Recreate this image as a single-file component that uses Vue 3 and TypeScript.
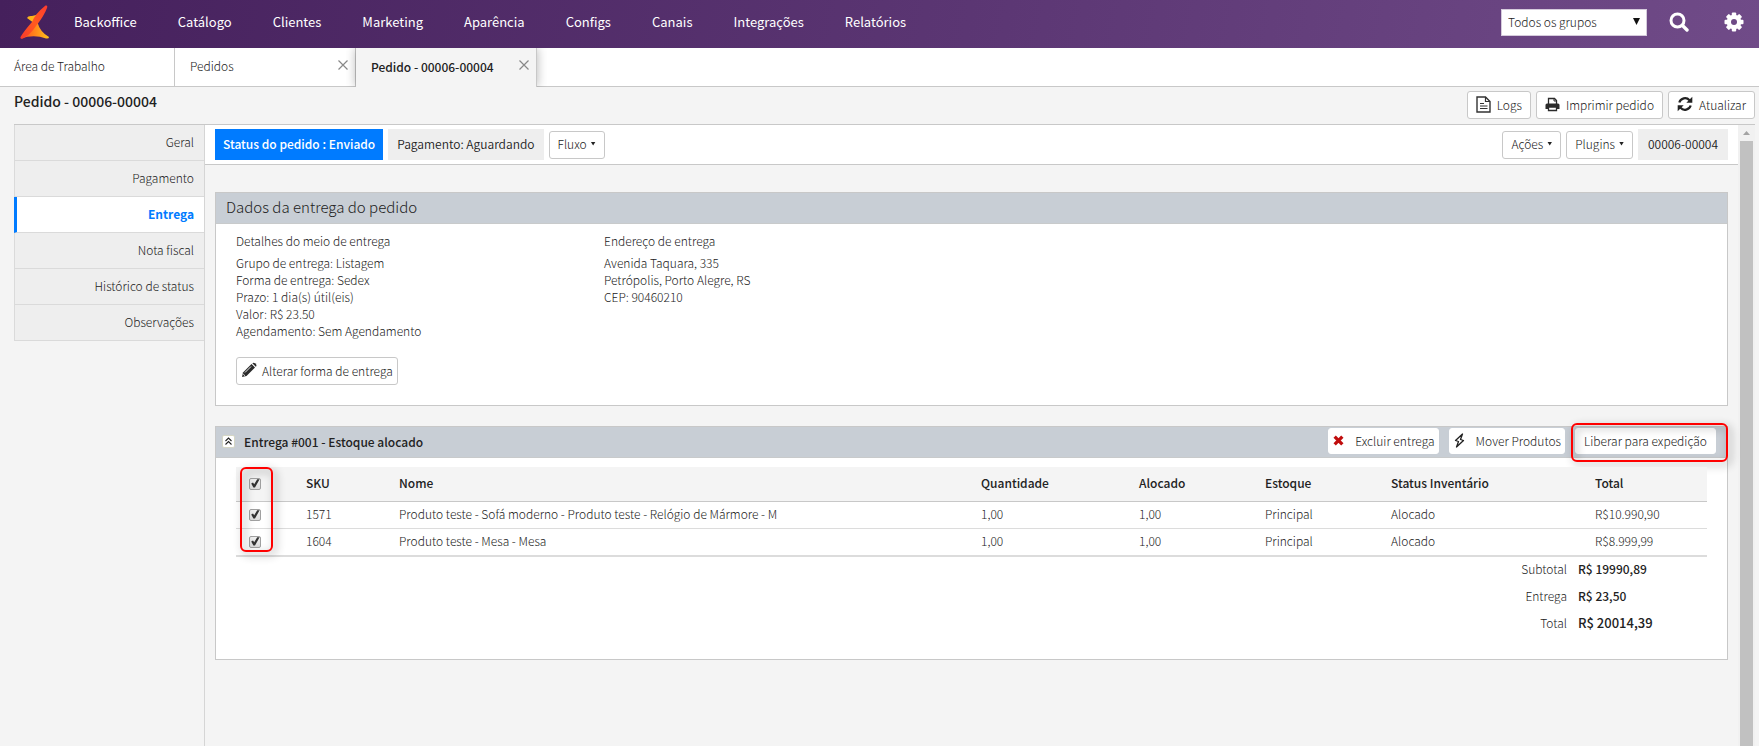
<script setup lang="ts">
import { computed, ref } from 'vue'

interface Product {
  sku: string
  name: string
  quantity: string
  allocated: string
  stock: string
  status: string
  total: string
  selected: boolean
}

const menu = ['Backoffice', 'Catálogo', 'Clientes', 'Marketing', 'Aparência', 'Configs', 'Canais', 'Integrações', 'Relatórios']
const sections = ['Geral', 'Pagamento', 'Entrega', 'Nota fiscal', 'Histórico de status', 'Observações']
const columns = ['SKU', 'Nome', 'Quantidade', 'Alocado', 'Estoque', 'Status Inventário', 'Total']

const group = ref('Todos os grupos')
const current = ref('Entrega')
const open = ref(true)

const deliveryLines = [
  'Grupo de entrega: Listagem',
  'Forma de entrega: Sedex',
  'Prazo: 1 dia(s) útil(eis)',
  'Valor: R$ 23.50',
  'Agendamento: Sem Agendamento',
]
const addressLines = ['Avenida Taquara, 335', 'Petrópolis, Porto Alegre, RS', 'CEP: 90460210']

const products = ref<Product[]>([
  {
    sku: '1571',
    name: 'Produto teste - Sofá moderno - Produto teste - Relógio de Mármore - M',
    quantity: '1,00',
    allocated: '1,00',
    stock: 'Principal',
    status: 'Alocado',
    total: 'R$10.990,90',
    selected: true,
  },
  {
    sku: '1604',
    name: 'Produto teste - Mesa - Mesa',
    quantity: '1,00',
    allocated: '1,00',
    stock: 'Principal',
    status: 'Alocado',
    total: 'R$8.999,99',
    selected: true,
  },
])

const allSelected = computed({
  get: () => products.value.every((p) => p.selected),
  set: (value: boolean) => products.value.forEach((p) => (p.selected = value)),
})
</script>

<template>
  <div class="app">
    <header class="topbar">
      <a class="logo" href="#" aria-label="Início">
        <svg viewBox="0 0 30 34" width="30" height="34" aria-hidden="true">
          <defs>
            <linearGradient id="blade" x1="1" y1="0" x2="0" y2="1">
              <stop offset="0" stop-color="#ff3b30" />
              <stop offset="0.5" stop-color="#ff5a1f" />
              <stop offset="1" stop-color="#f8382c" />
            </linearGradient>
            <linearGradient id="foot" x1="0" y1="0" x2="1" y2="0">
              <stop offset="0" stop-color="#ff4a1c" />
              <stop offset="1" stop-color="#ffc21a" />
            </linearGradient>
          </defs>
          <path d="M7 13 Q8 10.500 12 11 Q16 11 19 8 L16 21 Q12 16 7 13Z" fill="#fdb31b" />
          <path d="M12 20 L17.500 17.500 Q20 27 29 32 Q29 34 26 33.500 Q14 29 1 33.500Z" fill="url(#foot)" />
          <path d="M25.500 0.500 Q28 0 27 3 Q24 11 16 21 Q10 30 3 33.500 Q0 34.500 0.500 32 Q4 26 12 17 Q15 9 25.500 0.500Z" fill="url(#blade)" />
        </svg>
      </a>
      <nav class="menu" aria-label="Principal">
        <a v-for="item in menu" :key="item" href="#">{{ item }}</a>
      </nav>
      <div class="tools">
        <label class="group">
          <select v-model="group" aria-label="Grupo">
            <option>Todos os grupos</option>
          </select>
          <svg viewBox="0 0 7 7" width="7" height="7" aria-hidden="true"><path d="M0 0H7L3.500 7Z" fill="#111" /></svg>
        </label>
        <button class="tool" type="button" aria-label="Buscar">
          <svg viewBox="0 0 20 20" width="20" height="20" aria-hidden="true">
            <circle cx="8.500" cy="8.500" r="6.500" fill="none" stroke="#fff" stroke-width="3" />
            <path d="M13.500 13.500L18 18" stroke="#fff" stroke-width="3.400" stroke-linecap="round" />
          </svg>
        </button>
        <button class="tool" type="button" aria-label="Configurações">
          <svg viewBox="0 0 20 20" width="20" height="20" aria-hidden="true">
            <g fill="#fff">
              <rect v-for="a in [0, 45, 90, 135]" :key="a" x="7.800" y="0.500" width="4.400" height="19" rx="1" :transform="`rotate(${a} 10 10)`" />
              <circle cx="10" cy="10" r="7.300" />
            </g>
            <circle cx="10" cy="10" r="3" fill="#6e4a86" />
          </svg>
        </button>
      </div>
    </header>

    <nav class="tabs" aria-label="Abas">
      <div class="tab home"><a href="#">Área de Trabalho</a></div>
      <div class="tab">
        <a href="#">Pedidos</a>
        <button type="button" class="close" aria-label="Fechar Pedidos">
          <svg viewBox="0 0 10 10" width="10" height="10" aria-hidden="true"><path d="M0.500 0.500L9.500 9.500M9.500 0.500L0.500 9.500" stroke="#888" stroke-width="1.200" /></svg>
        </button>
      </div>
      <div class="tab active">
        <a href="#" aria-current="page">Pedido - 00006-00004</a>
        <button type="button" class="close" aria-label="Fechar Pedido">
          <svg viewBox="0 0 10 10" width="10" height="10" aria-hidden="true"><path d="M0.500 0.500L9.500 9.500M9.500 0.500L0.500 9.500" stroke="#888" stroke-width="1.200" /></svg>
        </button>
      </div>
    </nav>

    <div class="heading">
      <h1>Pedido - 00006-00004</h1>
      <div class="actions">
        <button type="button" class="btn">
          <svg viewBox="0 0 15 17" width="15" height="17" aria-hidden="true">
            <path d="M1 1H9.500L14 5.500V16H1Z" fill="#fff" stroke="#333" stroke-width="1.400" />
            <path d="M9.500 1V5.500H14" fill="none" stroke="#333" stroke-width="1.200" />
            <path d="M4 7.500H8M4 10H11.500M4 12.500H11.500" stroke="#333" stroke-width="1.200" />
          </svg>
          Logs
        </button>
        <button type="button" class="btn">
          <svg viewBox="0 0 15 15" width="15" height="15" aria-hidden="true">
            <path d="M3.500 7V1.500H9.500L11.500 3.500V7" fill="#fff" stroke="#2b2b2b" stroke-width="1.300" />
            <path d="M9 1.500V4H11.500" fill="none" stroke="#2b2b2b" />
            <path d="M2 6.500H13Q14.500 6.500 14.500 8V12H0.500V8Q0.500 6.500 2 6.500Z" fill="#2b2b2b" />
            <path d="M3.500 10H11.500V13.500H3.500Z" fill="#fff" stroke="#2b2b2b" stroke-width="1.300" />
          </svg>
          Imprimir pedido
        </button>
        <button type="button" class="btn">
          <svg viewBox="0 0 16 16" width="16" height="16" aria-hidden="true">
            <path d="M2.300 6.500A6 6 0 0 1 12.500 4.200" fill="none" stroke="#222" stroke-width="2.200" />
            <path d="M15.300 0.800V6.800H9.300Z" fill="#222" />
            <path d="M13.700 9.500A6 6 0 0 1 3.500 11.800" fill="none" stroke="#222" stroke-width="2.200" />
            <path d="M0.700 15.200V9.200H6.700Z" fill="#222" />
          </svg>
          Atualizar
        </button>
      </div>
    </div>

    <div class="workspace">
      <nav class="side" aria-label="Seções do pedido">
        <a v-for="s in sections" :key="s" href="#" :class="{ current: s === current }" @click.prevent="current = s">{{ s }}</a>
      </nav>

      <main class="main">
        <div class="statusbar">
          <span class="badge primary">Status do pedido : Enviado</span>
          <span class="badge">Pagamento: Aguardando</span>
          <button type="button" class="btn menu-btn">Fluxo <i class="caret"></i></button>
          <span class="spacer"></span>
          <button type="button" class="btn menu-btn">Ações <i class="caret"></i></button>
          <button type="button" class="btn menu-btn">Plugins <i class="caret"></i></button>
          <span class="badge code">00006-00004</span>
        </div>

        <section class="panel">
          <h2 class="panel-head title">Dados da entrega do pedido</h2>
          <div class="info">
            <div>
              <h3>Detalhes do meio de entrega</h3>
              <p v-for="line in deliveryLines" :key="line">{{ line }}</p>
            </div>
            <div>
              <h3>Endereço de entrega</h3>
              <p v-for="line in addressLines" :key="line">{{ line }}</p>
            </div>
          </div>
          <button type="button" class="btn edit">
            <svg viewBox="0 0 16 16" width="16" height="16" aria-hidden="true">
              <path d="M1 15L2 10.500L10.500 2L14 5.500L5.500 14Z" fill="#2b2b2b" />
              <path d="M11.300 1.300Q12.500 0 14 1.300L15 2.300Q16 3.500 14.800 4.700Z" fill="#2b2b2b" />
              <path d="M4 10.500L10 4.500" stroke="#fff" stroke-width="0.900" />
              <path d="M2.200 12L4 13.800" stroke="#fff" stroke-width="0.900" />
            </svg>
            Alterar forma de entrega
          </button>
        </section>

        <section class="panel">
          <div class="panel-head">
            <button type="button" class="toggle" :aria-expanded="open" aria-label="Recolher entrega" @click="open = !open">
              <svg viewBox="0 0 7 8" width="7" height="8" aria-hidden="true"><path d="M0.500 4L3.500 1L6.500 4M0.500 7.500L3.500 4.500L6.500 7.500" fill="none" stroke="#222" stroke-width="1.100" /></svg>
            </button>
            <h2>Entrega #001 - Estoque alocado</h2>
            <div class="panel-actions">
              <button type="button" class="flat">
                <svg viewBox="0 0 10 10" width="11" height="11" aria-hidden="true"><path d="M1.500 1.500L8.500 8.500M8.500 1.500L1.500 8.500" stroke="#c00d0d" stroke-width="3" /></svg>
                Excluir entrega
              </button>
              <button type="button" class="flat">
                <svg viewBox="0 0 11 15" width="11" height="15" aria-hidden="true"><path d="M8.500 1L1.500 7.500L4.500 8.500L2.500 14L9.500 7.500L6.500 6.500Z" fill="#fff" stroke="#222" stroke-width="1.300" stroke-linejoin="round" /></svg>
                Mover Produtos
              </button>
              <button type="button" class="flat release">Liberar para expedição</button>
            </div>
            <span class="mark mark-release"></span>
          </div>

          <div v-show="open" class="delivery">
            <div class="table-wrap">
              <table>
                <colgroup>
                  <col class="c-check" /><col class="c-sku" /><col /><col class="c-qty" /><col class="c-mid" /><col class="c-mid" /><col class="c-status" /><col class="c-total" />
                </colgroup>
                <thead>
                  <tr>
                    <th class="check"><input v-model="allSelected" type="checkbox" aria-label="Selecionar todos" /></th>
                    <th v-for="c in columns" :key="c" scope="col">{{ c }}</th>
                  </tr>
                </thead>
                <tbody>
                  <tr v-for="p in products" :key="p.sku">
                    <td class="check"><input v-model="p.selected" type="checkbox" :aria-label="`Selecionar ${p.sku}`" /></td>
                    <td>{{ p.sku }}</td>
                    <td>{{ p.name }}</td>
                    <td>{{ p.quantity }}</td>
                    <td>{{ p.allocated }}</td>
                    <td>{{ p.stock }}</td>
                    <td>{{ p.status }}</td>
                    <td>{{ p.total }}</td>
                  </tr>
                </tbody>
              </table>
              <span class="mark mark-checks"></span>
            </div>
            <dl class="totals">
              <dt>Subtotal</dt><dd>R$ 19990,89</dd>
              <dt>Entrega</dt><dd>R$ 23,50</dd>
              <dt>Total</dt><dd class="grand">R$ 20014,39</dd>
            </dl>
          </div>
        </section>
      </main>

      <div class="scrollbar" aria-hidden="true">
        <svg viewBox="0 0 7 4" width="7" height="4"><path d="M0 4L3.500 0L7 4Z" fill="#a3a3a3" /></svg>
        <div class="thumb"></div>
      </div>
    </div>
  </div>
</template>

<style>
body {
  background: #f4f4f4;
}
</style>

<style scoped>
.app {
  display: flex;
  flex-direction: column;
  min-height: 100vh;
  font-family: "Noto Sans CJK SC", "Open Sans", sans-serif;
  font-size: 12px;
  font-weight: 300;
  line-height: 17px;
  color: #222;
  background: #f4f4f4;
}
.app *,
.app *::before {
  box-sizing: border-box;
}
h1, h2, h3, p, dl, dd {
  margin: 0;
}
a {
  color: inherit;
  text-decoration: none;
}
button, select {
  font: inherit;
  color: inherit;
  cursor: pointer;
}
svg {
  display: block;
  flex: none;
}

.topbar {
  display: flex;
  align-items: center;
  height: 48px;
  padding: 0 15px 4px 20px;
  background: linear-gradient(100deg, #45205c, #5b3673 55%, #704b88);
  color: #fff;
}
.menu {
  display: flex;
  gap: 41px;
  margin-left: 24px;
  padding-bottom: 2px;
  font-size: 13px;
  font-weight: 400;
}
.tools {
  display: flex;
  align-items: center;
  margin-left: auto;
}
.group {
  position: relative;
  margin-right: 22px;
}
.group select {
  display: block;
  appearance: none;
  width: 146px;
  height: 27px;
  padding: 0 6px 2px;
  border: 1px solid #d5cbdc;
  border-radius: 0;
  background: #fff;
  color: #222;
}
.group svg {
  position: absolute;
  top: 9px;
  right: 7px;
  pointer-events: none;
}
.tool {
  padding: 0;
  border: 0;
  background: none;
}
.tool + .tool {
  margin-left: 35px;
}

.tabs {
  display: flex;
  height: 39px;
  border-bottom: 1px solid #c8c8c8;
  background: #fff;
}
.tab {
  display: flex;
  align-items: center;
  justify-content: space-between;
  width: 181px;
  height: 38px;
  padding: 0 7px 3px 15px;
  border-right: 1px solid #c8c8c8;
}
.tab.home {
  width: 175px;
  padding-left: 14px;
}
.tab.active {
  height: 39px;
  background: #f4f4f4;
  font-weight: 500;
  box-shadow: 0 0 10px rgba(0, 0, 0, 0.3);
  clip-path: inset(0 -10px 0 -10px);
}
.close {
  padding: 0 0 2px;
  border: 0;
  background: none;
}

.heading {
  display: flex;
  align-items: flex-start;
  justify-content: space-between;
  height: 37px;
  padding: 4px 4px 0 14px;
}
h1 {
  font-size: 14px;
  font-weight: 500;
  line-height: 20px;
}
.actions {
  display: flex;
  gap: 5px;
}
.btn {
  display: flex;
  align-items: center;
  height: 28px;
  gap: 6px;
  padding: 0 8px 2px;
  border: 1px solid #c8c8c8;
  border-radius: 3px;
  background: #fff;
}

.workspace {
  display: flex;
  flex: 1;
  margin: 0 4px 0 14px;
  border-top: 1px solid #c8c8c8;
}
.side {
  width: 190px;
  flex: none;
}
.side a {
  display: block;
  height: 36px;
  padding-right: 10px;
  border-bottom: 1px solid #dadada;
  border-left: 1px solid #dadada;
  background: #eee;
  line-height: 33px;
  text-align: right;
}
.side a.current {
  border-left: 3px solid #007bff;
  background: #fff;
  color: #007bff;
  font-weight: 700;
}

.main {
  flex: 1;
  min-width: 0;
  border-left: 1px solid #d5d5d5;
}
.statusbar {
  display: flex;
  align-items: center;
  height: 40px;
  gap: 5px;
  padding: 0 10px;
  border-bottom: 1px solid #c8c8c8;
  background: #fff;
}
.badge {
  height: 31px;
  padding: 0 9px;
  background: #eee;
  font-weight: 350;
  line-height: 30px;
}
.badge.primary {
  padding: 0 8px;
  background: #007bff;
  color: #fff;
  font-weight: 500;
}
.badge.code {
  min-width: 90px;
  text-align: center;
}
.menu-btn {
  gap: 4px;
}
.caret {
  width: 5px;
  height: 4px;
  background: #222;
  clip-path: polygon(0 0, 100% 0, 50% 100%);
}
.spacer {
  flex: 1;
}

.panel {
  margin: 27px 10px 0;
  border: 1px solid #c8c8c8;
  background: #fff;
}
.panel + .panel {
  margin-top: 20px;
}
.panel-head {
  position: relative;
  display: flex;
  align-items: center;
  height: 31px;
  padding: 0 11px 2px 6px;
  border-bottom: 1px solid #c8cacb;
  background: #c8ced5;
}
.panel-head h2 {
  font-size: 12px;
  font-weight: 500;
}
.panel-head.title {
  padding: 0 10px 2px;
  font-size: 15px;
  font-weight: 300;
  line-height: 20px;
}
.info {
  display: grid;
  grid-template-columns: 368px 1fr;
  padding: 8px 20px 0;
}
.info h3 {
  margin-bottom: 5px;
  font-size: 12px;
  font-weight: 300;
}
.edit {
  margin: 18px 20px 20px;
  padding: 0 4px 2px;
  gap: 5px;
}
.toggle {
  display: flex;
  align-items: center;
  justify-content: center;
  width: 13px;
  height: 13px;
  margin-right: 9px;
  padding: 0;
  border: 1px solid #d5d6c4;
  border-radius: 2px;
  background: #fff;
}
.panel-actions {
  display: flex;
  margin-left: auto;
  gap: 10px;
}
.flat {
  display: flex;
  align-items: center;
  justify-content: space-between;
  height: 26px;
  gap: 11px;
  padding: 0 3px 1px 4px;
  border: 1px solid #fff;
  border-radius: 3px;
  background: #fff;
}
.release {
  padding: 0 8px 1px;
}

.mark {
  position: absolute;
  border: 2px solid #f00;
  border-radius: 6px;
  filter: drop-shadow(3px 3px 4px rgba(0, 0, 0, 0.45));
  pointer-events: none;
}
.mark-release {
  top: -4px;
  right: -1px;
  width: 157px;
  height: 39px;
}
.mark-checks {
  top: 0;
  left: 4px;
  width: 33px;
  height: 85px;
}

.delivery {
  padding: 9px 20px 21px;
}
.table-wrap {
  position: relative;
}
table {
  width: 100%;
  table-layout: fixed;
  border-collapse: separate;
  border-spacing: 0;
  border-bottom: 1px solid #dcdcdc;
}
th, td {
  height: 27px;
  padding: 0 0 3px 10px;
  border-bottom: 1px solid #dcdcdc;
  text-align: left;
  white-space: nowrap;
}
th {
  height: 35px;
  border-color: #c8c8c8;
  background: #f4f4f4;
  font-weight: 500;
}
.c-check { width: 60px; }
.c-sku { width: 93px; }
.c-qty { width: 158px; }
.c-mid { width: 126px; }
.c-status { width: 204px; }
.c-total { width: 122px; }
.check {
  padding: 0 0 1px 13px;
}
input[type='checkbox'] {
  display: block;
  appearance: none;
  width: 12px;
  height: 12px;
  margin: 0;
  border: 1px solid #a0a0a0;
  border-radius: 2px;
  background: linear-gradient(#f0f0f0, #dcdcdc);
}
input[type='checkbox']:checked::before {
  content: '';
  display: block;
  width: 10px;
  height: 10px;
  background: #333;
  clip-path: polygon(12% 50%, 30% 40%, 42% 58%, 72% 8%, 96% 8%, 50% 90%, 34% 90%);
}
.totals {
  display: grid;
  grid-template-columns: 1fr 129px;
  grid-auto-rows: 27px;
  column-gap: 11px;
  line-height: 24px;
}
.totals dt {
  text-align: right;
}
.totals dd {
  font-weight: 500;
}
.totals .grand {
  font-size: 13px;
}

.scrollbar {
  display: flex;
  flex: none;
  flex-direction: column;
  align-items: center;
  width: 17px;
  padding-top: 6px;
  gap: 6px;
  background: #f1f1f1;
}
.thumb {
  flex: 1;
  width: 13px;
  background: #c1c1c1;
}
</style>
